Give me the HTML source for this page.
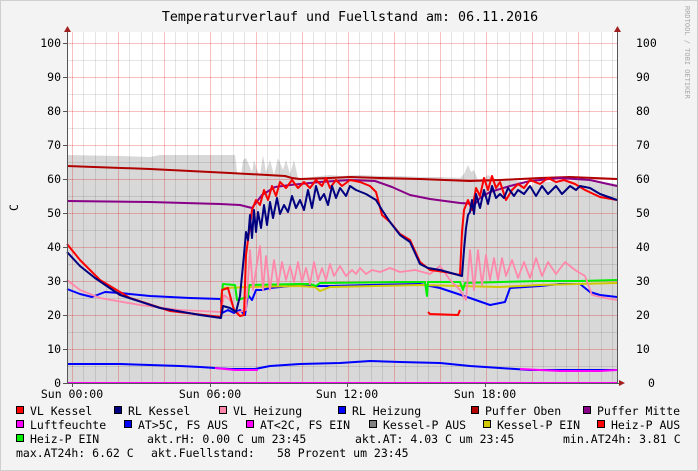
<!DOCTYPE html>
<html><head><meta charset="utf-8"><style>
html,body{margin:0;padding:0;background:#f3f3f3;}
svg{display:block;font-family:"DejaVu Sans Mono","Liberation Mono",monospace;}
</style></head><body>
<svg width="698" height="471" viewBox="0 0 698 471" xmlns="http://www.w3.org/2000/svg">
<rect x="0" y="0" width="698" height="471" fill="#f3f3f3"/>
<rect x="0.5" y="0.5" width="697" height="470" fill="none" stroke="#cfcfcf"/>
<text x="350" y="21" font-size="13.3" text-anchor="middle" fill="#000">Temperaturverlauf und Fuellstand am: 06.11.2016</text>
<text transform="translate(685,6) rotate(90)" font-size="7" fill="#aaa">RRDTOOL / TOBI OETIKER</text>
<rect x="67" y="32" width="550" height="351" fill="#fff"/>
<polygon fill="#d8d8d8" points="67,383 67,155 120,156 150,157 160,155 235,155 237,172 241,175 243,160 246,158 249,165 252,172 254,160 257,170 260,175 263,155 266,172 270,160 274,175 278,158 283,170 286,160 290,174 294,160 298,178 305,178 320,176 330,175 340,176 360,175 380,176 400,176 420,177 440,177 460,178 464,174 468,165 471,172 474,170 478,180 484,178 488,175 492,178 500,180 520,181 532,188 535,180 545,182 560,181 580,180 600,182 617,184 617,383"/>
<g stroke="#000" stroke-opacity="0.1" stroke-width="1">
<path d="M67 366.5H617M67 332.5H617M67 298.5H617M67 264.5H617M67 230.5H617M67 196.5H617M67 162.5H617M67 128.5H617M67 94.5H617M67 60.5H617"/>
<path d="M83.5 32V383M95.5 32V383M106.5 32V383M129.5 32V383M141.5 32V383M152.5 32V383M175.5 32V383M187.5 32V383M198.5 32V383M221.5 32V383M233.5 32V383M244.5 32V383M267.5 32V383M279.5 32V383M290.5 32V383M313.5 32V383M325.5 32V383M336.5 32V383M359.5 32V383M371.5 32V383M382.5 32V383M405.5 32V383M417.5 32V383M428.5 32V383M451.5 32V383M463.5 32V383M474.5 32V383M497.5 32V383M509.5 32V383M520.5 32V383M543.5 32V383M555.5 32V383M566.5 32V383M589.5 32V383M601.5 32V383M612.5 32V383"/>
</g>
<g stroke="#e00000" stroke-opacity="0.25" stroke-width="1">
<path d="M67 349.5H617M67 315.5H617M67 281.5H617M67 247.5H617M67 213.5H617M67 179.5H617M67 145.5H617M67 111.5H617M67 77.5H617M67 43.5H617"/>
<path d="M72.5 32V383M118.5 32V383M164.5 32V383M210.5 32V383M256.5 32V383M302.5 32V383M348.5 32V383M394.5 32V383M440.5 32V383M486.5 32V383M532.5 32V383M578.5 32V383"/>
</g>
<g fill="none" stroke-width="2" stroke-linejoin="round">
<polyline stroke="#0000ff" points="67,364 120,364 180,366 200,367 230,369 255,369 270,366 300,364 340,363 370,361 400,362 440,363 470,366 500,368 530,370 570,370 617,370"/>
<polyline stroke="#ff00ff" points="215,368 235,370 258,370"/>
<polyline stroke="#ff00ff" points="520,369 560,371 600,371 617,370"/>
<polyline stroke="#ff00ff" points="67,383 617,383"/>
<polyline stroke="#0000ff" points="67,289 80,294 92,297 105,292 120,293 150,296 190,298 221,299 222,313 228,310 234,313 240,310 245,315 248,295 252,300 256,290 262,290 270,288 290,286 330,286 370,285 420,284 440,288 470,298 490,305 505,302 510,288 540,286 560,284 580,284 590,292 600,295 617,297"/>
<polyline stroke="#d0c800" points="222,288 250,287 300,286 315,287 320,291 330,287 420,285 500,287 540,285 617,283"/>
<polyline stroke="#00ee00" points="221,300 223,284 235,285 237,300 248,297 249,285 300,284 310,284 316,286 320,283 400,282 425,282 427,296 428,282 460,282 463,290 465,283 500,282 540,281 580,281 617,280"/>
<polyline stroke="#ff88aa" stroke-width="1.8" points="67,280 80,290 100,298 140,305 180,310 221,312 224,295 230,300 236,313 246,310 250,250 253,290 256,270 260,246 263,290 266,256 270,290 274,260 278,285 282,262 286,280 290,266 294,282 298,262 302,282 306,268 310,284 314,262 318,280 322,268 326,280 330,264 334,276 340,266 346,276 352,270 356,274 360,268 366,274 372,270 380,272 390,268 400,272 415,270 430,274 440,266 450,280 460,290 466,300 470,250 474,290 478,250 482,285 486,255 490,280 494,258 498,280 502,258 506,276 512,260 518,278 524,262 530,278 536,258 542,276 548,262 556,274 565,262 575,270 585,276 592,295 605,298 617,300"/>
<polyline stroke="#b00000" points="67,166 150,169 230,173 285,176 292,178 300,179 330,178 350,177 380,178 420,179 470,181 500,180 540,178 570,177 617,179"/>
<polyline stroke="#880088" points="67,201 150,202 220,204 240,205 252,208 262,195 275,187 290,185 320,182 350,180 375,181 392,187 410,195 430,199 460,203 475,204 480,198 490,192 510,186 530,181 560,178 590,180 617,186"/>
<polyline stroke="#ff0000" points="67,244 80,260 100,280 130,298 170,311 221,317 222,290 228,288 234,310 240,316 244,315 246,255 250,225 252,210 256,200 260,205 264,190 268,200 272,186 276,196 280,182 286,188 292,180 298,188 304,182 310,188 316,180 322,186 326,178 330,188 336,180 342,186 350,180 360,182 370,186 376,192 382,215 390,222 400,234 410,240 420,262 430,270 445,272 460,275 462,232 464,210 468,200 472,210 476,188 480,196 484,178 488,190 492,176 496,188 500,182 506,200 512,190 518,184 524,188 530,180 540,184 548,178 556,182 564,180 575,184 585,190 600,197 617,200"/>
<polyline stroke="#ff0000" points="428,312 430,314 458,315 460,310"/>
<polyline stroke="#000080" points="67,252 80,266 95,278 120,295 160,308 200,315 221,318 223,306 230,308 236,312 240,296 244,255 246,232 248,240 250,215 252,238 254,210 256,232 258,212 261,228 264,205 267,225 270,202 273,218 277,198 280,214 284,205 288,212 292,196 296,208 300,200 304,210 308,190 312,208 316,186 320,200 324,194 328,205 332,186 336,198 340,188 346,196 350,186 356,190 366,194 376,200 382,210 390,222 400,235 410,242 420,264 428,268 440,270 462,276 464,250 466,228 468,215 470,212 472,200 474,214 476,194 480,208 484,190 488,204 492,186 496,198 500,194 504,198 508,188 514,196 518,190 524,194 530,186 536,196 542,186 548,194 556,186 562,194 570,186 576,190 580,186 590,188 600,194 617,200"/>
</g>
<path d="M67.5 383V28M67 383.5H621" stroke="#555" stroke-width="1"/>
<path d="M617.5 383V28" stroke="#555" stroke-width="1"/>
<polygon points="64,32 71,32 67.5,26" fill="#a02020"/>
<polygon points="614,32 621,32 617.5,26" fill="#a02020"/>
<polygon points="619,380 619,386 625,383" fill="#a02020"/>
<g stroke="#555"><path d="M63 383.5h4M63 349.5h4M63 315.5h4M63 281.5h4M63 247.5h4M63 213.5h4M63 179.5h4M63 145.5h4M63 111.5h4M63 77.5h4M63 43.5h4M72.5 383v4M210.5 383v4M347.5 383v4M485.5 383v4"/></g>
<g font-size="11.5" fill="#000">
<g text-anchor="end">
<text x="61" y="47">100</text><text x="61" y="81">90</text><text x="61" y="115">80</text><text x="61" y="149">70</text><text x="61" y="183">60</text><text x="61" y="217">50</text><text x="61" y="251">40</text><text x="61" y="285">30</text><text x="61" y="319">20</text><text x="61" y="353">10</text><text x="61" y="387">0</text>
</g>
<text x="636" y="47">100</text><text x="636" y="81">90</text><text x="636" y="115">80</text><text x="636" y="149">70</text><text x="636" y="183">60</text><text x="636" y="217">50</text><text x="636" y="251">40</text><text x="636" y="285">30</text><text x="636" y="319">20</text><text x="636" y="353">10</text><text x="648" y="387">0</text>
<text transform="translate(18,211) rotate(-90)">C</text>
<g text-anchor="middle"><text x="72" y="398">Sun 00:00</text><text x="210" y="398">Sun 06:00</text><text x="347" y="398">Sun 12:00</text><text x="485" y="398">Sun 18:00</text></g>
</g>
<g stroke="#000" stroke-width="1">
<rect x="16.5" y="406.5" width="7" height="7" fill="#ff0000"/>
<rect x="114.5" y="406.5" width="7" height="7" fill="#000080"/>
<rect x="219.5" y="406.5" width="7" height="7" fill="#ff88aa"/>
<rect x="338.5" y="406.5" width="7" height="7" fill="#0000ff"/>
<rect x="471.5" y="406.5" width="7" height="7" fill="#b00000"/>
<rect x="583.5" y="406.5" width="7" height="7" fill="#880088"/>
<rect x="16.5" y="420.5" width="7" height="7" fill="#ff00ff"/>
<rect x="124.5" y="420.5" width="7" height="7" fill="#0000ff"/>
<rect x="246.5" y="420.5" width="7" height="7" fill="#ff00ff"/>
<rect x="369.5" y="420.5" width="7" height="7" fill="#808080"/>
<rect x="483.5" y="420.5" width="7" height="7" fill="#d0c800"/>
<rect x="597.5" y="420.5" width="7" height="7" fill="#ff0000"/>
<rect x="16.5" y="434.5" width="7" height="7" fill="#00ee00"/>
</g>
<g font-size="11.5" fill="#000" xml:space="preserve">
<text x="30" y="415">VL Kessel</text>
<text x="128" y="415">RL Kessel</text>
<text x="233" y="415">VL Heizung</text>
<text x="352" y="415">RL Heizung</text>
<text x="485" y="415">Puffer Oben</text>
<text x="597" y="415">Puffer Mitte</text>
<text x="30" y="429">Luftfeuchte</text>
<text x="138" y="429">AT&gt;5C, FS AUS</text>
<text x="260" y="429">AT&lt;2C, FS EIN</text>
<text x="383" y="429">Kessel-P AUS</text>
<text x="497" y="429">Kessel-P EIN</text>
<text x="611" y="429">Heiz-P AUS</text>
<text x="30" y="443">Heiz-P EIN</text>
<text x="147" y="443">akt.rH: 0.00 C um 23:45</text>
<text x="355" y="443">akt.AT: 4.03 C um 23:45</text>
<text x="563" y="443">min.AT24h: 3.81 C</text>
<text x="16" y="457">max.AT24h: 6.62 C</text>
<text x="151" y="457">akt.Fuellstand:</text>
<text x="277" y="457">58 Prozent um 23:45</text>
</g>
</svg>
</body></html>
